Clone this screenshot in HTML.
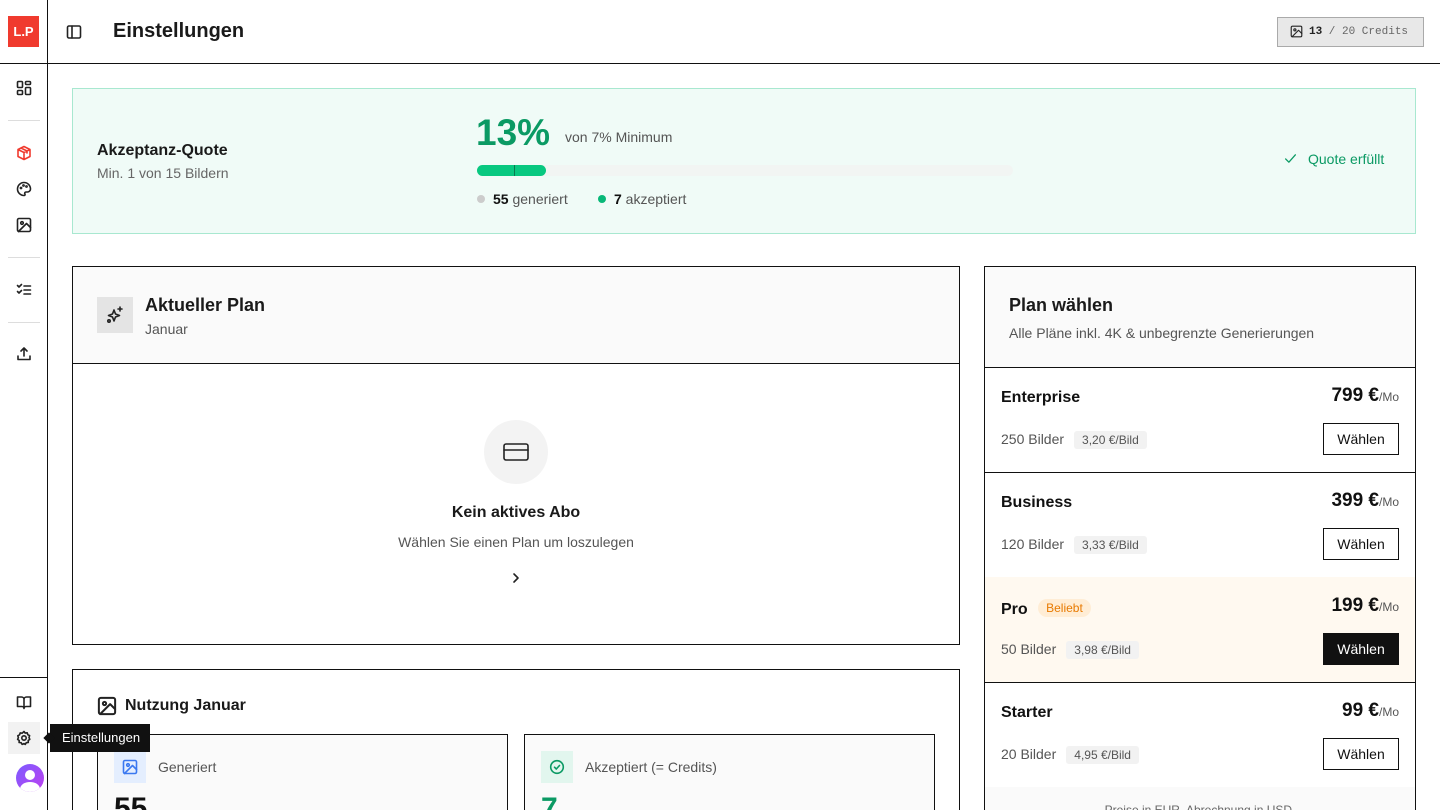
<!DOCTYPE html>
<html style="width:1440px;height:810px;overflow:hidden"><head><meta charset="utf-8"><style>
*{box-sizing:border-box;margin:0;padding:0}
body{width:1440px;height:810px;overflow:hidden;background:#fff;font-family:"Liberation Sans",sans-serif;color:#111;position:relative}
.a{position:absolute}
svg{fill:none;stroke:#222;stroke-width:1.6;stroke-linecap:round;stroke-linejoin:round}
.sep{position:absolute;left:8px;width:32px;height:1px;background:#ddd}
.row{position:absolute;left:984px;width:432px;height:106px;border-bottom:1px solid #111}
.row .n{position:absolute;left:17px;top:22px;font-size:16px;font-weight:bold}
.row .p{position:absolute;right:17px;top:18px;font-size:19px;font-weight:bold}
.row .p small{font-size:12px;font-weight:normal;color:#555}
.row .b{position:absolute;left:17px;top:64px;font-size:14px;color:#555}
.row .t{display:inline-block;margin-left:10px;background:#f2f2f2;border-radius:3px;padding:2px 8px;font-size:12px;color:#555}
.row .w{position:absolute;right:17px;top:56px;width:76px;height:32px;border:1px solid #111;font-size:14px;text-align:center;line-height:30px;background:#fff}
</style></head><body>
<!-- sidebar -->
<div class="a" style="left:47px;top:0;width:1px;height:810px;background:#111"></div>
<div class="a" style="left:0;top:63px;width:1440px;height:1px;background:#111"></div>
<div class="a" style="left:8px;top:16px;width:31px;height:31px;background:#f03a2e;color:#fff;font-weight:bold;font-size:13px;text-align:center;line-height:31px">L.P</div>
<svg class="a" style="left:16px;top:80px" width="16" height="16" viewBox="0 0 16 16"><rect x="1.5" y="1.5" width="5" height="6" rx="1"/><rect x="9.5" y="1.5" width="5" height="3" rx="1"/><rect x="9.5" y="7.5" width="5" height="7" rx="1"/><rect x="1.5" y="10.5" width="5" height="4" rx="1"/></svg>
<div class="sep" style="top:120px"></div>
<svg class="a" style="left:16px;top:145px;stroke:#f03a2e" width="16" height="16" viewBox="0 0 16 16"><path d="M8 1.5l6 3v7l-6 3-6-3v-7z M2 4.5l6 3 6-3 M8 7.5v7 M5 3l6 3v2"/></svg>
<svg class="a" style="left:16px;top:181px" width="16" height="16" viewBox="0 0 16 16"><path d="M8 1.5a6.5 6.5 0 0 0 0 13c1 0 1.3-.8.9-1.6-.5-.9 0-1.9 1.1-1.9h1.5a3 3 0 0 0 3-3C14.5 4.4 11.6 1.5 8 1.5z"/><circle cx="5" cy="7" r=".6"/><circle cx="7.5" cy="4.5" r=".6"/><circle cx="10.5" cy="5.5" r=".6"/></svg>
<svg class="a" style="left:16px;top:217px" width="16" height="16" viewBox="0 0 16 16"><rect x="1.5" y="1.5" width="13" height="13" rx="1.5"/><circle cx="6" cy="6" r="1.3"/><path d="M14.5 10.5l-4-4-8 8"/></svg>
<div class="sep" style="top:257px"></div>
<svg class="a" style="left:16px;top:282px" width="16" height="16" viewBox="0 0 16 16"><path d="M1.5 3.5l1.5 1.5 2.5-2.5 M1.5 9.5l1.5 1.5 2.5-2.5 M8 4h6.5 M8 8h6.5 M8 12h6.5"/></svg>
<div class="sep" style="top:322px"></div>
<svg class="a" style="left:16px;top:346px" width="16" height="16" viewBox="0 0 16 16"><path d="M8 10V2 M5 5l3-3 3 3 M2 10v3.5h12V10"/></svg>
<div class="a" style="left:0;top:677px;width:47px;height:1px;background:#111"></div>
<svg class="a" style="left:16px;top:694px" width="16" height="16" viewBox="0 0 16 16"><path d="M1.5 3h4a2.5 2.5 0 0 1 2.5 2.5v9a2 2 0 0 0-2-2H1.5z M14.5 3h-4A2.5 2.5 0 0 0 8 5.5v9a2 2 0 0 1 2-2h4.5z"/></svg>
<div class="a" style="left:8px;top:722px;width:32px;height:32px;background:#f2f2f2"></div>
<svg class="a" style="left:16px;top:730px" width="16" height="16" viewBox="0 0 16 16"><circle cx="8" cy="8" r="2.2"/><path d="M8 1.5l1.2 1.6 2-.3.6 1.9 1.8.9-.6 1.9.8 1.8-1.6 1.2.1 2-2 .2-1 1.7L8 13.6l-1.9.8-1-1.7-2-.2.1-2L1.6 9.4l.8-1.8-.6-1.9 1.8-.9.6-1.9 2 .3z"/></svg>
<div class="a" style="left:16px;top:764px;width:28px;height:28px;border-radius:50%;background:linear-gradient(135deg,#7b5cff,#c040f0);overflow:hidden"><div class="a" style="left:9px;top:6px;width:10px;height:10px;border-radius:50%;background:#fff"></div><div class="a" style="left:4px;top:18px;width:20px;height:14px;border-radius:50%;background:#fff"></div></div>
<!-- header -->
<svg class="a" style="left:66px;top:24px" width="16" height="16" viewBox="0 0 16 16"><rect x="1.5" y="2" width="13" height="12" rx="1.5"/><path d="M6 2v12"/></svg>
<div class="a" style="left:113px;top:20px;font-size:20px;font-weight:bold;color:#1a1a1a">Einstellungen</div>
<div class="a" style="left:1277px;top:17px;width:147px;height:30px;background:#e8e8e8;border:1px solid #aaa;font-family:'Liberation Mono',monospace;font-size:11px;color:#666;line-height:28px;padding-left:31px"><b style="color:#222">13</b> / 20 Credits</div>
<svg class="a" style="left:1290px;top:25px;stroke-width:1.4" width="13" height="13" viewBox="0 0 16 16"><rect x="1.5" y="1.5" width="13" height="13" rx="1.5"/><circle cx="6" cy="6" r="1.3"/><path d="M14.5 10.5l-4-4-8 8"/></svg>
<!-- quote -->
<div class="a" style="left:72px;top:88px;width:1344px;height:146px;background:#f0fbf7;border:1px solid #a8e8d0"></div>
<div class="a" style="left:97px;top:142px;font-size:16px;font-weight:bold;color:#1a1a1a">Akzeptanz-Quote</div>
<div class="a" style="left:97px;top:165px;font-size:14px;color:#666">Min. 1 von 15 Bildern</div>
<div class="a" style="left:476px;top:112px;font-size:37px;font-weight:bold;color:#0b9a64">13%</div>
<div class="a" style="left:565px;top:129px;font-size:14px;color:#555">von 7% Minimum</div>
<div class="a" style="left:477px;top:165px;width:536px;height:11px;background:#f2f5f3;border-radius:6px"></div>
<div class="a" style="left:477px;top:165px;width:69px;height:11px;background:#08c880;border-radius:6px"></div>
<div class="a" style="left:514px;top:165px;width:1px;height:11px;background:#087a50"></div>
<div class="a" style="left:477px;top:195px;width:8px;height:8px;border-radius:50%;background:#ccc"></div>
<div class="a" style="left:493px;top:191px;font-size:14px;color:#555"><b style="color:#111;font-weight:600">55</b> generiert</div>
<div class="a" style="left:598px;top:195px;width:8px;height:8px;border-radius:50%;background:#08b878"></div>
<div class="a" style="left:614px;top:191px;font-size:14px;color:#555"><b style="color:#111;font-weight:600">7</b> akzeptiert</div>
<svg class="a" style="left:1284px;top:152px;stroke:#0b9a64" width="13" height="13" viewBox="0 0 16 16"><path d="M2 8.5l4 4 8-9"/></svg>
<div class="a" style="left:1308px;top:151px;font-size:14px;color:#0b9a64">Quote erfüllt</div>
<!-- plan card -->
<div class="a" style="left:72px;top:266px;width:888px;height:379px;border:1px solid #111"></div>
<div class="a" style="left:73px;top:267px;width:886px;height:97px;background:#fafafa;border-bottom:1px solid #111"></div>
<div class="a" style="left:97px;top:297px;width:36px;height:36px;background:#e4e4e4"></div>
<svg class="a" style="left:105px;top:305px" width="20" height="20" viewBox="0 0 20 20"><path d="M9 5l1.5 4 4 1.5-4 1.5L9 16l-1.5-4-4-1.5 4-1.5z M15 2v4 M13 4h4"/><circle cx="4" cy="16" r="1.2"/></svg>
<div class="a" style="left:145px;top:295px;font-size:18px;font-weight:bold;color:#1a1a1a">Aktueller Plan</div>
<div class="a" style="left:145px;top:321px;font-size:14px;color:#555">Januar</div>
<div class="a" style="left:484px;top:420px;width:64px;height:64px;border-radius:50%;background:#f3f3f3"></div>
<svg class="a" style="left:501px;top:437px" width="30" height="30" viewBox="0 0 30 30"><rect x="3" y="7" width="24" height="16" rx="2"/><path d="M3 13h24"/></svg>
<div class="a" style="left:0;width:1032px;top:504px;text-align:center;font-size:16px;font-weight:bold;color:#1a1a1a">Kein aktives Abo</div>
<div class="a" style="left:0;width:1032px;top:534px;text-align:center;font-size:14px;color:#555">Wählen Sie einen Plan um loszulegen</div>
<svg class="a" style="left:509px;top:571px" width="14" height="14" viewBox="0 0 14 14"><path d="M5 3l4 4-4 4"/></svg>
<!-- usage -->
<div class="a" style="left:72px;top:669px;width:888px;height:150px;border:1px solid #111"></div>
<svg class="a" style="left:97px;top:696px" width="20" height="20" viewBox="0 0 16 16"><rect x="1.5" y="1.5" width="13" height="13" rx="1.5"/><circle cx="6" cy="6" r="1.3"/><path d="M14.5 10.5l-4-4-8 8"/></svg>
<div class="a" style="left:125px;top:697px;font-size:16px;font-weight:bold;color:#1a1a1a">Nutzung Januar</div>
<div class="a" style="left:97px;top:734px;width:411px;height:90px;border:1px solid #111;background:#fafafa"></div>
<div class="a" style="left:114px;top:751px;width:32px;height:32px;background:#e4eefe"></div>
<svg class="a" style="left:122px;top:759px;stroke:#3a78f0" width="16" height="16" viewBox="0 0 16 16"><rect x="1.5" y="1.5" width="13" height="13" rx="1.5"/><circle cx="6" cy="6" r="1.3"/><path d="M14.5 10.5l-4-4-8 8"/></svg>
<div class="a" style="left:158px;top:759px;font-size:14px;color:#555">Generiert</div>
<div class="a" style="left:114px;top:792px;font-size:30px;font-weight:bold;color:#111">55</div>
<div class="a" style="left:524px;top:734px;width:411px;height:90px;border:1px solid #111;background:#fafafa"></div>
<div class="a" style="left:541px;top:751px;width:32px;height:32px;background:#e2f6ee"></div>
<svg class="a" style="left:549px;top:759px;stroke:#0b9a64" width="16" height="16" viewBox="0 0 16 16"><circle cx="8" cy="8" r="6.3"/><path d="M5.5 8.2l1.8 1.8 3.2-3.5"/></svg>
<div class="a" style="left:585px;top:759px;font-size:14px;color:#555">Akzeptiert (= Credits)</div>
<div class="a" style="left:541px;top:792px;font-size:30px;font-weight:bold;color:#0b9a64">7</div>
<!-- tooltip -->
<div class="a" style="z-index:10;left:50px;top:724px;width:100px;height:28px;background:#111;color:#fff;font-size:13px;line-height:28px;padding-left:12px">Einstellungen</div>
<div class="a" style="z-index:10;left:45px;top:734px;width:8px;height:8px;background:#111;transform:rotate(45deg)"></div>
<!-- plans -->
<div class="a" style="left:984px;top:266px;width:432px;height:102px;border:1px solid #111;background:#fafafa"></div>
<div class="a" style="left:1009px;top:295px;font-size:18px;font-weight:bold;color:#1a1a1a">Plan wählen</div>
<div class="a" style="left:1009px;top:325px;font-size:14px;color:#555">Alle Pläne inkl. 4K &amp; unbegrenzte Generierungen</div>
<div class="row" style="top:367px"><div class="n">Enterprise</div><div class="p">799 €<small>/Mo</small></div><div class="b">250 Bilder<span class="t">3,20 €/Bild</span></div><div class="w">Wählen</div></div>
<div class="row" style="top:472px"><div class="n">Business</div><div class="p">399 €<small>/Mo</small></div><div class="b">120 Bilder<span class="t">3,33 €/Bild</span></div><div class="w">Wählen</div></div>
<div class="row" style="top:577px;background:#fff9f0"><div class="n">Pro <span style="display:inline-block;margin-left:6px;background:#ffedd5;color:#e87a00;font-size:12px;font-weight:normal;border-radius:10px;padding:2px 8px;vertical-align:2px">Beliebt</span></div><div class="p">199 €<small>/Mo</small></div><div class="b">50 Bilder<span class="t">3,98 €/Bild</span></div><div class="w" style="background:#111;color:#fff">Wählen</div></div>
<div class="row" style="top:682px"><div class="n">Starter</div><div class="p">99 €<small>/Mo</small></div><div class="b">20 Bilder<span class="t">4,95 €/Bild</span></div><div class="w">Wählen</div></div>
<div class="row" style="top:787px;height:23px;border-bottom:none;background:#fafafa"><div style="position:absolute;left:0;right:0;top:16px;text-align:center;font-size:12px;color:#666">Preise in EUR. Abrechnung in USD.</div></div>
<div class="a" style="z-index:5;left:984px;top:266px;width:1px;height:544px;background:#111"></div>
<div class="a" style="z-index:5;left:1415px;top:266px;width:1px;height:544px;background:#111"></div>
</body></html>
